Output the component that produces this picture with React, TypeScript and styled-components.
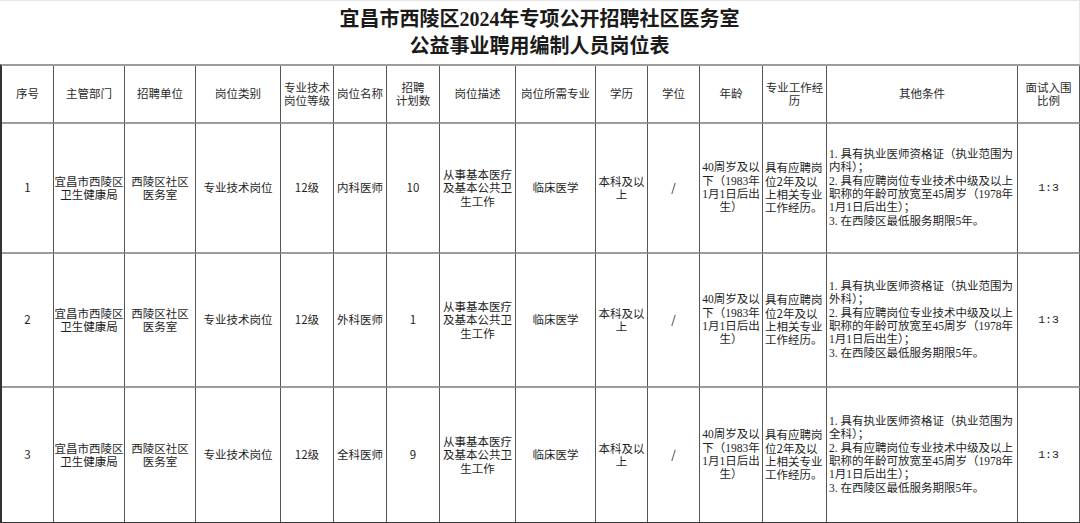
import React from "react";
import styled, { createGlobalStyle } from "styled-components";

const GlobalStyle = createGlobalStyle`
  html, body {
    margin: 0;
    padding: 0;
    background: #fff;
  }
  body {
    font-family: "Noto Sans CJK SC", "Liberation Sans", sans-serif;
    color: #222;
  }
`;

const columns = [52, 71, 71, 85, 53, 53, 53, 76, 80, 52, 52, 63, 64, 191, 62];

const headers: string[][] = [
  ["序号"],
  ["主管部门"],
  ["招聘单位"],
  ["岗位类别"],
  ["专业技术", "岗位等级"],
  ["岗位名称"],
  ["招聘", "计划数"],
  ["岗位描述"],
  ["岗位所需专业"],
  ["学历"],
  ["学位"],
  ["年龄"],
  ["专业工作经", "历"],
  ["其他条件"],
  ["面试入围", "比例"],
];

const jobs = [
  { id: "1", name: "内科医师", count: "10", scope: "内科" },
  { id: "2", name: "外科医师", count: "1", scope: "外科" },
  { id: "3", name: "全科医师", count: "9", scope: "全科" },
];

type Align = "left" | "center";
type Face = "sans" | "serif" | "mono";

const buildCells = (job: (typeof jobs)[number]) => [
  { lines: [job.id] },
  { lines: ["宜昌市西陵区", "卫生健康局"] },
  { lines: ["西陵区社区", "医务室"] },
  { lines: ["专业技术岗位"] },
  { lines: ["12级"] },
  { lines: [job.name] },
  { lines: [job.count] },
  { lines: ["从事基本医疗", "及基本公共卫", "生工作"] },
  { lines: ["临床医学"] },
  { lines: ["本科及以", "上"] },
  { lines: ["/"] },
  { lines: ["40周岁及以", "下（1983年", "1月1日后出", "生）"], face: "serif" as Face },
  { lines: ["具有应聘岗", "位2年及以", "上相关专业", "工作经历。"], align: "left" as Align },
  {
    lines: [
      "1. 具有执业医师资格证（执业范围为",
      `${job.scope}）；`,
      "2. 具有应聘岗位专业技术中级及以上",
      "职称的年龄可放宽至45周岁（1978年",
      "1月1日后出生）；",
      "3. 在西陵区最低服务期限5年。",
    ],
    align: "left" as Align,
    face: "serif" as Face,
  },
  { lines: ["1:3"], face: "mono" as Face },
];

const fontStack: Record<Face, string> = {
  sans: `"Noto Sans CJK SC", "Liberation Sans", sans-serif`,
  serif: `"Liberation Serif", "Noto Sans CJK SC", serif`,
  mono: `"Liberation Mono", "Noto Sans CJK SC", monospace`,
};

const App = () => {
  return (
    <Page>
      <GlobalStyle />
      <Title>
        <span>宜昌市西陵区2024年专项公开招聘社区医务室</span>
        <span>公益事业聘用编制人员岗位表</span>
      </Title>
      <Table>
        {headers.map((h, i) => (
          <HeadCell key={`h${i}`}>
            {h.map((l) => (
              <Line key={l}>{l}</Line>
            ))}
          </HeadCell>
        ))}
        {jobs.map((job, r) =>
          buildCells(job).map((c, i) => (
            <Cell
              key={`${job.id}-${i}`}
              $align={c.align || "center"}
              $face={c.face || "sans"}
              $last={r === jobs.length - 1}
            >
              {c.lines.map((l) => (
                <Line key={l}>{l}</Line>
              ))}
            </Cell>
          ))
        )}
      </Table>
    </Page>
  );
};

const Page = styled.div`
  width: 1080px;
  height: 523px;
  overflow: hidden;
  background: #fff;
`;

const Title = styled.header`
  height: 64px;
  box-sizing: border-box;
  border-top: 1px solid #e6e6e6;
  border-right: 1px solid #e6e6e6;
  display: flex;
  flex-direction: column;
  align-items: center;
  justify-content: center;
  font-family: "Liberation Serif", "Noto Sans CJK SC", serif;
  font-weight: 700;
  font-size: 20px;
  line-height: 27px;
  color: #1a1a1a;
`;

const Table = styled.div`
  display: grid;
  grid-template-columns: ${columns.map((c) => `${c}px`).join(" ")};
  grid-template-rows: 58px 130px 134px 135px;
  border-left: 2px solid #333;
  border-top: 2px solid #9c9c9c;
`;

const Line = styled.span`
  display: block;
  white-space: nowrap;
`;

const HeadCell = styled.div`
  box-sizing: border-box;
  display: flex;
  flex-direction: column;
  align-items: center;
  justify-content: center;
  text-align: center;
  border-right: 1px solid #555;
  border-bottom: 2px solid #9c9c9c;
  font-size: 11.5px;
  line-height: 13.4px;
  color: #2a2a2a;
`;

const Cell = styled.div<{ $align: Align; $face: Face; $last: boolean }>`
  box-sizing: border-box;
  display: flex;
  flex-direction: column;
  justify-content: center;
  align-items: ${(p) => (p.$align === "left" ? "flex-start" : "center")};
  text-align: ${(p) => p.$align};
  padding: 0 ${(p) => (p.$align === "left" ? "2px" : "1px")};
  border-right: 1px solid #555;
  border-bottom: ${(p) => (p.$last ? "1px solid #333" : "2px solid #9c9c9c")};
  font-family: ${(p) => fontStack[p.$face]};
  font-size: 11.5px;
  line-height: 13.4px;
  color: #1e1e1e;
  overflow: hidden;
`;

export default App;
